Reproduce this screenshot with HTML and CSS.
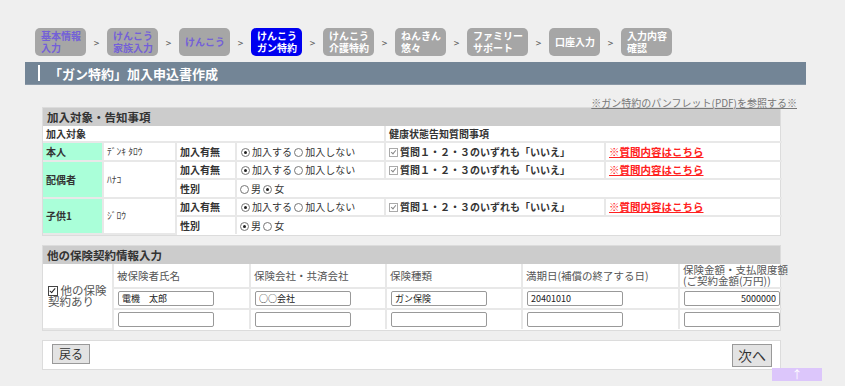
FILE: index.html
```html
<!DOCTYPE html>
<html lang="ja">
<head>
  <meta charset="UTF-8" />
  <title>「ガン特約」加入申込書作成</title>
  <link rel="stylesheet" href="styles.css">
</head>
<body>
  <div class="page">
    <div class="steps">
      <div class="step done">基本情報<br>入力</div><span class="arrow">&gt;</span>
      <div class="step done">けんこう<br>家族入力</div><span class="arrow">&gt;</span>
      <div class="step done one">けんこう</div><span class="arrow">&gt;</span>
      <div class="step active">けんこう<br>ガン特約</div><span class="arrow">&gt;</span>
      <div class="step">けんこう<br>介護特約</div><span class="arrow">&gt;</span>
      <div class="step">ねんきん<br>悠々</div><span class="arrow">&gt;</span>
      <div class="step">ファミリー<br>サポート</div><span class="arrow">&gt;</span>
      <div class="step one">口座入力</div><span class="arrow">&gt;</span>
      <div class="step">入力内容<br>確認</div>
    </div>

    <h1 class="title"><span class="bar"></span>「ガン特約」加入申込書作成</h1>

    <div class="pdf-line"><a href="#" class="pdf">※ガン特約のパンフレット(PDF)を参照する※</a></div>

    <div class="section">
      <h2 class="sec-head">加入対象・告知事項</h2>
      <table class="tbl targets">
        <colgroup>
          <col style="width:60px"><col style="width:73px"><col style="width:60px">
          <col style="width:149px"><col style="width:220px"><col style="width:177px">
        </colgroup>
        <tr>
          <td colspan="4" class="b">加入対象</td>
          <td colspan="2" class="b">健康状態告知質問事項</td>
        </tr>
        <tr>
          <td class="who">本人</td>
          <td class="kana">ﾃﾞﾝｷ ﾀﾛｳ</td>
          <td class="b">加入有無</td>
          <td><span class="rd on"></span>加入する <span class="rd"></span>加入しない</td>
          <td class="b"><span class="ck"></span>質問１・２・３のいずれも「いいえ」</td>
          <td><a href="#" class="red">※質問内容はこちら</a></td>
        </tr>
        <tr>
          <td class="who" rowspan="2">配偶者</td>
          <td class="kana" rowspan="2">ﾊﾅｺ</td>
          <td class="b">加入有無</td>
          <td><span class="rd on"></span>加入する <span class="rd"></span>加入しない</td>
          <td class="b"><span class="ck"></span>質問１・２・３のいずれも「いいえ」</td>
          <td><a href="#" class="red">※質問内容はこちら</a></td>
        </tr>
        <tr>
          <td class="b">性別</td>
          <td colspan="3"><span class="rd"></span>男 <span class="rd on"></span>女</td>
        </tr>
        <tr>
          <td class="who" rowspan="2">子供1</td>
          <td class="kana" rowspan="2">ｼﾞﾛｳ</td>
          <td class="b">加入有無</td>
          <td><span class="rd on"></span>加入する <span class="rd"></span>加入しない</td>
          <td class="b"><span class="ck"></span>質問１・２・３のいずれも「いいえ」</td>
          <td><a href="#" class="red">※質問内容はこちら</a></td>
        </tr>
        <tr>
          <td class="b">性別</td>
          <td colspan="3"><span class="rd on"></span>男 <span class="rd"></span>女</td>
        </tr>
      </table>
    </div>

    <div class="section">
      <h2 class="sec-head">他の保険契約情報入力</h2>
      <table class="tbl others">
        <colgroup>
          <col style="width:70px"><col style="width:137px"><col style="width:136px">
          <col style="width:136px"><col style="width:157px"><col style="width:103px">
        </colgroup>
        <tr class="hd">
          <td rowspan="3" class="has"><span class="box"></span> 他の保険<br>契約あり</td>
          <td>被保険者氏名</td>
          <td>保険会社・共済会社</td>
          <td>保険種類</td>
          <td>満期日(補償の終了する日)</td>
          <td class="two">保険金額・支払限度額<br>(ご契約金額(万円))</td>
        </tr>
        <tr class="in">
          <td><input type="text" value="電機　太郎"></td>
          <td><input type="text" value="○○会社"></td>
          <td><input type="text" value="ガン保険"></td>
          <td><input type="text" value="20401010"></td>
          <td><input type="text" class="num" value="5000000"></td>
        </tr>
        <tr class="in">
          <td><input type="text"></td>
          <td><input type="text"></td>
          <td><input type="text"></td>
          <td><input type="text"></td>
          <td><input type="text"></td>
        </tr>
      </table>
    </div>

    <div class="footer">
      <button class="btn">戻る</button>
      <button class="btn next">次へ</button>
    </div>
  </div>
  <a href="#" class="to-top">↑</a>
</body>
</html>
```

FILE: styles.css
```css
body {
  margin: 0;
  background: #efefef;
  font-family: "Noto Sans CJK JP", "Noto Sans", sans-serif;
  color: #333;
}
.page {
  width: 781px;
  margin-left: 25px;
}
.steps {
  display: flex;
  align-items: center;
  margin-top: 28px;
  padding-left: 10px;
  height: 28px;
}
.step {
  height: 28px;
  box-sizing: border-box;
  padding: 2px 5px 0 6px;
  background: #a6a6a6;
  border-radius: 5px;
  color: #fff;
  font-size: 10px;
  font-weight: bold;
  line-height: 12px;
}
.step.one {
  padding-top: 8px;
}
.step.done {
  color: #7360d8;
}
.step.active {
  background: #0000f0;
  color: #fff;
}
.arrow {
  width: 21px;
  text-align: center;
  font-size: 10px;
  color: #555;
}
.title {
  display: flex;
  align-items: center;
  margin: 6px 0 0;
  height: 22px;
  background: #738596;
  color: #fff;
  font-size: 13px;
  font-weight: bold;
  border-bottom: 1px solid #8a98a6;
}
.title .bar {
  width: 2px;
  height: 16px;
  background: #fff;
  margin: 0 9px 0 13px;
}
.pdf-line {
  text-align: right;
  margin-right: 9px;
  height: 22px;
  line-height: 30px;
}
.pdf {
  color: #777;
  font-size: 10px;
}
.section {
  margin-left: 17px;
  width: 739px;
  background: #fff;
  border: 1px solid #dcdcdc;
  box-sizing: border-box;
  margin-bottom: 9px;
}
.sec-head {
  margin: 0;
  height: 18px;
  line-height: 18px;
  background: #cccccc;
  padding-left: 4px;
  font-size: 11.5px;
  font-weight: bold;
  color: #333;
}
.tbl {
  width: 100%;
  border-collapse: collapse;
  table-layout: fixed;
  font-size: 10px;
}
.tbl td {
  border: 2px solid #e8e8e8;
  padding: 0 3px;
  height: 16.5px;
  line-height: 13px;
  white-space: nowrap;
}
.tbl tr:first-child td {
  border-top: 0;
}
.tbl td:first-child {
  border-left: 0;
}
.tbl td:last-child {
  border-right: 0;
}
.tbl tr:last-child td {
  border-bottom: 0;
}
.targets tr:first-child td {
  height: 15px;
}
.b {
  font-weight: bold;
}
.who {
  background: #aaffd9;
  font-weight: bold;
}
.kana {
  font-size: 9.5px;
  color: #444;
}
.targets td:nth-child(4) {
  padding-left: 4px;
}
.rd {
  display: inline-block;
  width: 7px;
  height: 7px;
  border: 1px solid #777;
  border-radius: 50%;
  margin-right: 2px;
  vertical-align: -1px;
  box-sizing: content-box;
  position: relative;
}
.rd.on::after {
  content: "";
  position: absolute;
  left: 2px;
  top: 2px;
  width: 3px;
  height: 3px;
  border-radius: 50%;
  background: #222;
}
.ck {
  display: inline-block;
  width: 7px;
  height: 7px;
  border: 1px solid #aaa;
  margin-right: 2px;
  vertical-align: -1px;
  position: relative;
}
.ck::after {
  content: "";
  position: absolute;
  left: 2px;
  top: 0;
  width: 2px;
  height: 4px;
  border: solid #888;
  border-width: 0 1px 1px 0;
  transform: rotate(40deg);
}
.red {
  color: #ff2020;
  font-weight: bold;
  font-size: 10.5px;
}
.others td {
  color: #555;
  font-size: 10.5px;
}
.others .hd td {
  height: 23px;
  line-height: 11px;
}
.others .in td {
  height: 19px;
}
.others .has {
  font-size: 11.5px;
  line-height: 12px;
  white-space: normal;
  padding-left: 5px;
}
.box {
  display: inline-block;
  width: 8px;
  height: 8px;
  border: 1px solid #444;
  position: relative;
  vertical-align: -1px;
}
.box::after {
  content: "";
  position: absolute;
  left: 2px;
  top: 0;
  width: 2px;
  height: 5px;
  border: solid #222;
  border-width: 0 1.5px 1.5px 0;
  transform: rotate(40deg);
}
.others input {
  width: 96px;
  height: 15px;
  box-sizing: border-box;
  border: 1px solid #999;
  border-radius: 2px;
  padding: 0 3px;
  font-family: inherit;
  font-size: 9px;
  color: #222;
  margin-left: 1px;
}
.others input.num {
  text-align: right;
}
.footer {
  margin-left: 17px;
  width: 739px;
  box-sizing: border-box;
  height: 30px;
  background: #fff;
  border: 1px solid #dcdcdc;
  display: flex;
  justify-content: space-between;
  align-items: flex-start;
  padding: 3px 8px 0 9px;
  margin-top: 8px;
}
.btn {
  font-family: inherit;
  font-size: 12px;
  height: 20px;
  padding: 0 6px;
  line-height: 16px;
  background: #e3e3e3;
  border: 1px solid #999;
  color: #333;
}
.btn.next {
  font-size: 14px;
  height: 23px;
  padding: 0 5px;
}
.to-top {
  position: absolute;
  left: 772px;
  top: 368px;
  width: 50px;
  height: 13px;
  background: #dcc6fb;
  color: #fff;
  text-align: center;
  font-size: 11px;
  line-height: 13px;
  text-decoration: none;
}
```
